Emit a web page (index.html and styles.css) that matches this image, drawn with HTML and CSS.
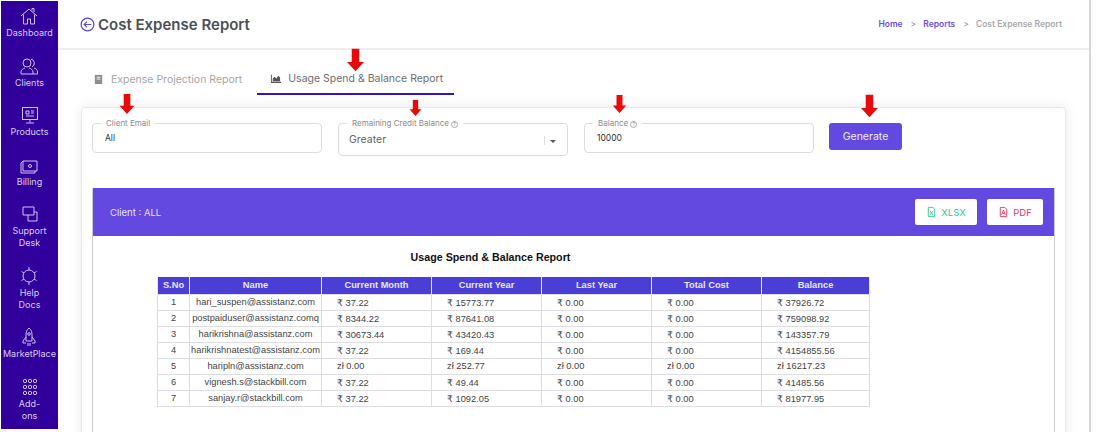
FILE: index.html
```html
<!DOCTYPE html>
<html lang="en">
<head>
  <meta charset="UTF-8" />
  <title>Cost Expense Report</title>
  <link rel="stylesheet" href="styles.css">
</head>
<body>
  <div class="app">
    <!-- Sidebar -->
    <nav class="sidebar">
      <a class="nav-item">
        <svg viewBox="0 0 20 20"><path d="M2 10 10 3l8 7M4.500 8.500V18h4v-5h3v5h4V8.500M13 4.500V2.500h2v3.500"/></svg>
        <span>Dashboard</span>
      </a>
      <a class="nav-item">
        <svg viewBox="0 0 20 20"><circle cx="8" cy="7" r="4"/><path d="M2 18v-2c0-2 2-3.500 4-4M10 12c2 .5 4 2 4 4v2H2M12 3.200a4 4 0 0 1 1 7.600M15 12c2 .5 3.500 2 3.500 4v2H14"/></svg>
        <span>Clients</span>
      </a>
      <a class="nav-item">
        <svg viewBox="0 0 20 20"><rect x="2.500" y="2.500" width="15" height="12"/><path d="M6 6h3v3H6zM11 6h3M11 8h3M6 11h8M10 14.500v3M6 18h8"/></svg>
        <span>Products</span>
      </a>
      <a class="nav-item">
        <svg viewBox="0 0 20 20"><path d="M4 6h14v10H4zM4 6l-2 2v10h14v-2"/><circle cx="11" cy="11" r="1.500"/></svg>
        <span>Billing</span>
      </a>
      <a class="nav-item">
        <svg viewBox="0 0 20 20"><path d="M3 3h11v8H3zM8 11v6h9V8h-3"/></svg>
        <span>Support<br>Desk</span>
      </a>
      <a class="nav-item">
        <svg viewBox="0 0 20 20"><circle cx="10" cy="10" r="6"/><path d="M10 1v3M10 16v3M2.500 5.500l2.500 1.500M15 13l2.500 1.500M2.500 14.500 5 13M15 7l2.500-1.500"/></svg>
        <span>Help<br>Docs</span>
      </a>
      <a class="nav-item">
        <svg viewBox="0 0 20 20"><path d="M10 1c2.500 2 3 4.500 3 7v6H7V8c0-2.500.5-5 3-7zM7 10l-3 4v2h3M13 10l3 4v2h-3M9 16v3M11 16v3"/><circle cx="10" cy="7" r="1.300"/></svg>
        <span>MarketPlace</span>
      </a>
      <a class="nav-item">
        <svg viewBox="0 0 20 20"><g class="dots"><circle cx="5" cy="4" r="1.700"/><circle cx="10" cy="4" r="1.700"/><circle cx="15" cy="4" r="1.700"/><circle cx="5" cy="10" r="1.700"/><circle cx="10" cy="10" r="1.700"/><circle cx="15" cy="10" r="1.700"/><circle cx="5" cy="16" r="1.700"/><circle cx="10" cy="16" r="1.700"/><circle cx="15" cy="16" r="1.700"/></g></svg>
        <span>Add-<br>ons</span>
      </a>
    </nav>

    <!-- Main -->
    <main class="main">
      <header class="topbar">
        <div class="page-title">
          <svg class="back-icon" viewBox="0 0 16 16"><circle cx="8" cy="8" r="6.800"/><path d="M12 8H4.500M7.500 5 4.500 8l3 3"/></svg>
          <h1>Cost Expense Report</h1>
        </div>
        <div class="breadcrumb">
          <a>Home</a><i>&gt;</i><a>Reports</a><i>&gt;</i><span>Cost Expense Report</span>
        </div>
      </header>

      <div class="tabs">
        <div class="tab">
          <svg viewBox="0 0 12 12"><path class="solid" d="M2 1h8v10H2z"/><path class="cut" d="M4 3.500h4M4 5.500h4"/></svg>
          Expense Projection Report
        </div>
        <div class="tab active">
          <svg viewBox="0 0 12 12"><path class="solid" d="M1 2h1v7.500h10V11H1zM3 9V6l2-2 2 2 2-3 2 2v4z"/></svg>
          Usage Spend &amp; Balance Report
        </div>
      </div>

      <section class="card">
        <div class="filters">
          <div class="field">
            <label>Client Email</label>
            <div class="value">All</div>
          </div>
          <div class="field select">
            <label>Remaining Credit Balance <em>?</em></label>
            <div class="value">Greater</div>
            <b class="caret"></b>
          </div>
          <div class="field">
            <label>Balance <em>?</em></label>
            <div class="value">10000</div>
          </div>
          <button class="generate">Generate</button>
        </div>

        <div class="report">
          <div class="report-head">
            <span>Client : ALL</span>
            <div class="exports">
              <button class="xlsx">
                <svg viewBox="0 0 12 12"><path d="M2.500 1h5l2 2v8h-7zM4.500 5l3 4M7.500 5l-3 4"/></svg>XLSX
              </button>
              <button class="pdf">
                <svg viewBox="0 0 12 12"><path d="M2.500 1h5l2 2v8h-7zM4 9l2-5 2 5M4.800 7.500h2.400"/></svg>PDF
              </button>
            </div>
          </div>
          <div class="report-body">
            <h2>Usage Spend &amp; Balance Report</h2>
            <table>
              <thead>
                <tr><th class="c-no">S.No</th><th class="c-name">Name</th><th class="c-m">Current Month</th><th class="c-m">Current Year</th><th class="c-m">Last Year</th><th class="c-m">Total Cost</th><th>Balance</th></tr>
              </thead>
              <tbody>
                <tr><td>1</td><td>hari_suspen@assistanz.com</td><td class="num">₹ 37.22</td><td class="num">₹ 15773.77</td><td class="num">₹ 0.00</td><td class="num">₹ 0.00</td><td class="num">₹ 37926.72</td></tr>
                <tr><td>2</td><td>postpaiduser@assistanz.comq</td><td class="num">₹ 8344.22</td><td class="num">₹ 87641.08</td><td class="num">₹ 0.00</td><td class="num">₹ 0.00</td><td class="num">₹ 759098.92</td></tr>
                <tr><td>3</td><td>harikrishna@assistanz.com</td><td class="num">₹ 30673.44</td><td class="num">₹ 43420.43</td><td class="num">₹ 0.00</td><td class="num">₹ 0.00</td><td class="num">₹ 143357.79</td></tr>
                <tr><td>4</td><td>harikrishnatest@assistanz.com</td><td class="num">₹ 37.22</td><td class="num">₹ 169.44</td><td class="num">₹ 0.00</td><td class="num">₹ 0.00</td><td class="num">₹ 4154855.56</td></tr>
                <tr><td>5</td><td>haripln@assistanz.com</td><td class="num">zł 0.00</td><td class="num">zł 252.77</td><td class="num">zł 0.00</td><td class="num">zł 0.00</td><td class="num">zł 16217.23</td></tr>
                <tr><td>6</td><td>vignesh.s@stackbill.com</td><td class="num">₹ 37.22</td><td class="num">₹ 49.44</td><td class="num">₹ 0.00</td><td class="num">₹ 0.00</td><td class="num">₹ 41485.56</td></tr>
                <tr><td>7</td><td>sanjay.r@stackbill.com</td><td class="num">₹ 37.22</td><td class="num">₹ 1092.05</td><td class="num">₹ 0.00</td><td class="num">₹ 0.00</td><td class="num">₹ 81977.95</td></tr>
              </tbody>
            </table>
          </div>
        </div>
      </section>
    </main>

    <!-- Red annotation arrows -->
    <svg class="arrow a-tab" viewBox="0 0 18 24"><path d="M5 0h8v14h5l-9 10-9-10h5z"/></svg>
    <svg class="arrow a-email" viewBox="0 0 18 24"><path d="M5 0h8v14h5l-9 10-9-10h5z"/></svg>
    <svg class="arrow a-credit" viewBox="0 0 18 24"><path d="M5 0h8v14h5l-9 10-9-10h5z"/></svg>
    <svg class="arrow a-balance" viewBox="0 0 18 24"><path d="M5 0h8v14h5l-9 10-9-10h5z"/></svg>
    <svg class="arrow a-generate" viewBox="0 0 18 24"><path d="M5 0h8v14h5l-9 10-9-10h5z"/></svg>
  </div>
</body>
</html>
```

FILE: styles.css
```css
/* Reset & Base */
* { margin: 0; padding: 0; box-sizing: border-box; }
html, body { width: 100%; height: 100%; overflow: hidden; background: #fff; font-family: 'Inter', 'Open Sans', sans-serif; color: #444; }
.app { position: relative; display: flex; width: 1098px; height: 432px; overflow: hidden; }

/* Sidebar */
.sidebar {
  width: 57px; height: 428px; margin: 1px 0 0 1px; flex-shrink: 0; background: #31009c;
  display: flex; flex-direction: column; align-items: center; gap: 16.5px; padding-top: 5px; overflow: hidden;
}
.nav-item { display: flex; flex-direction: column; align-items: center; color: #d9cdf6; font-size: 9px; line-height: 12px; text-align: center; }
.nav-item svg { width: 20px; height: 20px; margin-bottom: 1px; fill: none; stroke: #cfc2f2; stroke-width: 1; }

/* Main */
.main { width: 1033px; height: 432px; flex-shrink: 0; border-right: 2px solid #d6d6d6; background: #fff; overflow: hidden; }
.topbar { height: 50px; padding: 0 27px 0 22px; display: flex; align-items: center; justify-content: space-between; border-bottom: 2px solid #eee; }
.page-title { display: flex; align-items: center; gap: 3px; }
.back-icon { width: 15px; height: 15px; fill: none; stroke: #5f45d8; stroke-width: 1.300; }
.page-title h1 { font-size: 15px; font-weight: 600; color: #4b4f56; }
.breadcrumb { display: flex; align-items: center; font-size: 8.500px; font-weight: 600; color: #6a4fe0; }
.breadcrumb i { font-style: normal; font-weight: 400; color: #888; margin: 0 7px 0 8px; }
.breadcrumb span { color: #a9a9ad; }

/* Tabs */
.tabs { display: flex; gap: 15px; height: 45px; padding: 16px 0 0 22px; }
.tab { display: flex; align-items: center; gap: 7px; height: 29px; padding: 0 0 2px 13px; font-size: 10.500px; color: #a5a5a5; }
.tab svg { width: 11px; height: 11px; }
.tab .solid { fill: #8d8d8d; }
.tab .cut { stroke: #fff; fill: none; }
.tab.active { width: 197px; color: #6e6e6e; border-bottom: 2px solid #3a13b8; }
.tab.active .solid { fill: #555; }

/* Card */
.card {
  margin: 12px 23px 0 23px; height: 340px; padding: 15px 10px 0 10px; background: #fff;
  border: 1px solid #e8e8e8; border-radius: 4px; box-shadow: 0 0 14px rgba(0,0,0,0.08);
}

/* Filters */
.filters { display: flex; align-items: flex-start; gap: 16px; height: 65px; }
.field { position: relative; width: 230px; height: 30px; border: 1px solid #dcdcdc; border-radius: 4px; display: flex; align-items: center; padding: 0 12px; }
.field label { position: absolute; top: -6px; left: 8px; padding: 0 5px; background: #fff; font-size: 8px; line-height: 10px; color: #8b8b8b; }
.field label em { display: inline-block; width: 7px; height: 7px; border: 1px solid #aaa; border-radius: 50%; font-size: 5px; line-height: 5px; text-align: center; font-style: normal; vertical-align: 0; }
.value { font-size: 8.500px; color: #333; }
.field.select { height: 33px; padding-left: 10px; }
.field.select .value { font-size: 10.500px; color: #666; }
.caret { position: absolute; right: 11px; top: 16px; border: 3px solid transparent; border-top-color: #555; border-bottom: 0; }
.caret::before { content: ""; position: absolute; left: -9px; top: -7px; height: 9px; border-left: 1px solid #ddd; }
.generate { width: 73px; height: 27px; margin-left: -1px; background: #6349e0; color: #efeaff; border: none; border-radius: 3px; font: 10.500px 'Inter', sans-serif; }

/* Report */
.report { border: 1px solid #c9c9d6; border-top: none; height: 260px; }
.report-head { height: 48px; background: #6349e0; color: #e6e0ff; display: flex; align-items: center; justify-content: space-between; padding: 0 11px 0 17px; font-size: 9.500px; }
.exports { display: flex; gap: 10px; }
.exports button { height: 26px; background: #fff; border: none; border-radius: 2px; display: flex; align-items: center; justify-content: center; gap: 4px; font: 9.500px 'Inter', sans-serif; }
.exports svg { width: 11px; height: 12px; fill: none; stroke: currentColor; }
.xlsx { width: 62px; color: #2ecc8b; }
.pdf { width: 56px; color: #e8365d; }
.report-body { padding: 14px 0 0 64px; }
.report-body h2 { width: 667px; text-align: center; font: bold 10.700px 'Liberation Sans', sans-serif; line-height: 14px; color: #111; margin-bottom: 13px; }

/* Table */
table { width: 713px; table-layout: fixed; border-collapse: collapse; font: 9.300px 'Liberation Sans', 'DejaVu Sans', sans-serif; color: #444; }
th { height: 17px; background: #4a3ed6; color: #e8e8ff; font-weight: bold; border: 1px solid #e6e6f2; border-width: 0 1px; }
td { height: 16px; text-align: center; border: 1px solid #dcdce2; padding: 0; }
td.num { text-align: left; padding-left: 15px; }
.c-no { width: 32px; }
.c-name { width: 132px; }
.c-m { width: 110px; }

/* Annotation arrows */
.arrow { position: absolute; fill: #e80a0a; }
.a-tab { left: 347px; top: 48px; width: 17px; height: 24px; }
.a-email { left: 119px; top: 94px; width: 16px; height: 20px; }
.a-credit { left: 408px; top: 100px; width: 15px; height: 16px; }
.a-balance { left: 612px; top: 95px; width: 15px; height: 18px; }
.a-generate { left: 861px; top: 94px; width: 17px; height: 24px; }
```
